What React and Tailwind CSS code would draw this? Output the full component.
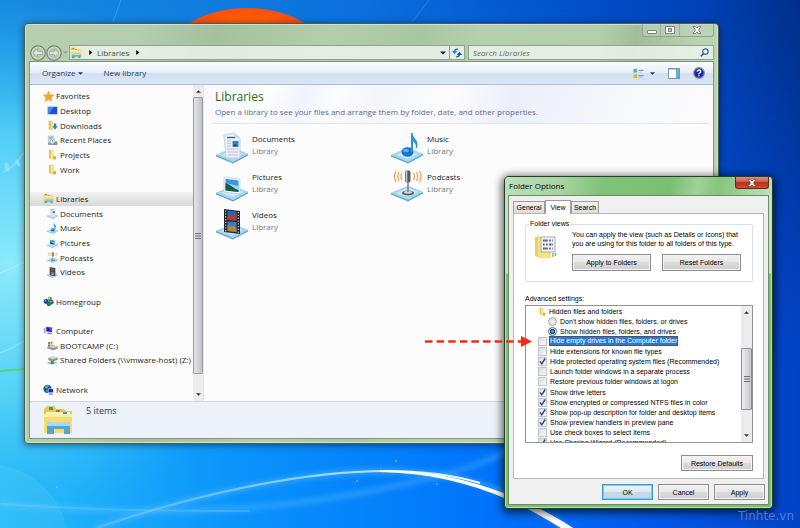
import React from "react";

const SEGOE = "font-['Open_Sans','Noto_Sans',sans-serif]";
const ARIAL = "font-['Liberation_Sans',Arial,sans-serif]";

/* ---------- Wallpaper ---------- */

function Wallpaper() {
  return (
    <svg className="absolute inset-0 h-full w-full" viewBox="0 0 800 528" preserveAspectRatio="none" aria-hidden="true">
      <defs>
        <linearGradient id="sky" x1="0" y1="0" x2="1" y2="0">
          <stop offset="0" stopColor="#188bdf" />
          <stop offset="0.45" stopColor="#0c70dd" />
          <stop offset="0.7" stopColor="#0352cc" />
          <stop offset="0.88" stopColor="#0141b4" />
          <stop offset="1" stopColor="#013089" />
        </linearGradient>
        <linearGradient id="sea" x1="0" y1="0" x2="1" y2="0">
          <stop offset="0" stopColor="#27bdf8" />
          <stop offset="0.3" stopColor="#0a93fb" />
          <stop offset="0.6" stopColor="#0074fb" />
          <stop offset="0.82" stopColor="#0458e8" />
          <stop offset="1" stopColor="#0243c6" />
        </linearGradient>
        <linearGradient id="seaFade" x1="0" y1="0" x2="0" y2="1">
          <stop offset="0" stopColor="#fff" stopOpacity="0" />
          <stop offset="0.7" stopColor="#fff" stopOpacity="1" />
        </linearGradient>
        <mask id="seaMask">
          <rect width="800" height="528" fill="url(#seaFade)" />
        </mask>
        <radialGradient id="glow" gradientUnits="userSpaceOnUse" cx="0" cy="0" r="1" gradientTransform="translate(10 265) scale(250 265)">
          <stop offset="0" stopColor="#8deafb" />
          <stop offset="0.5" stopColor="#58d3f7" stopOpacity="0.9" />
          <stop offset="1" stopColor="#2ab2f4" stopOpacity="0" />
        </radialGradient>
        <radialGradient id="orange" cx="0.5" cy="0.4" r="0.6">
          <stop offset="0" stopColor="#ff8a00" />
          <stop offset="0.5" stopColor="#fd5d08" />
          <stop offset="1" stopColor="#f03a12" />
        </radialGradient>
        <linearGradient id="beam" gradientUnits="userSpaceOnUse" x1="90" y1="0" x2="600" y2="0">
          <stop offset="0" stopColor="#7fd4ff" stopOpacity="0.3" />
          <stop offset="0.5" stopColor="#bfe9ff" stopOpacity="0.85" />
          <stop offset="0.8" stopColor="#fff" />
        </linearGradient>
        <filter id="soft" x="-10%" y="-50%" width="120%" height="200%">
          <feGaussianBlur stdDeviation="2.5" />
        </filter>
      </defs>
      <rect width="800" height="528" fill="url(#sky)" />
      <rect width="800" height="528" fill="url(#sea)" mask="url(#seaMask)" />
      <rect width="800" height="528" fill="url(#glow)" />
      <ellipse cx="247" cy="66" rx="86" ry="58" fill="url(#orange)" />
      <path d="M121 0 113 22" stroke="#5ab4f5" strokeOpacity="0.5" />
      <path d="M429 0 412 22" stroke="#5ab4f5" strokeOpacity="0.35" />
      <path d="M3 172Q14 168 24 152" stroke="#a5ecfa" strokeOpacity="0.5" strokeWidth="1.500" fill="none" />
      <ellipse cx="7" cy="167" rx="2.500" ry="5" fill="#a5ecfa" fillOpacity="0.5" transform="rotate(-20 7 167)" />
      <ellipse cx="18" cy="163" rx="2" ry="4" fill="#a5ecfa" fillOpacity="0.5" transform="rotate(-30 18 163)" />
      <path d="M0 273Q12 269 24 262M0 353Q12 349 24 341" stroke="#c8f5ff" strokeOpacity="0.5" fill="none" />
      <path d="M0 371Q12 370 24 369" stroke="#55d873" strokeWidth="2" fill="none" />
      <path d="M0 466C40 474 60 500 66 528H0Z" fill="#7fdcff" fillOpacity="0.12" />
      <path d="M0 466C40 474 60 500 66 528" stroke="#7fdcff" strokeOpacity="0.15" fill="none" />
      <path d="M0 504C120 514 240 516 360 493S500 455 520 445" stroke="#6cc8ff" strokeOpacity="0.3" strokeWidth="6" fill="none" filter="url(#soft)" />
      <path d="M0 504Q120 512 250 511" stroke="#8bdcff" strokeOpacity="0.25" strokeWidth="2" fill="none" />
      <path d="M96 528C190 496 300 471 386 471C470 471 526 497 580 538" stroke="#58b7ff" strokeOpacity="0.5" strokeWidth="6" fill="none" filter="url(#soft)" />
      <path d="M96 528C190 496 300 471 386 471C420 471 450 474 480 483" stroke="url(#beam)" strokeWidth="2" fill="none" />
      <path d="M380 470C448 470 520 491 582 534L570 534C510 494 450 473 380 472Z" fill="#fff" />
      <g fill="#8fd0ff" fillOpacity="0.7">
        <circle cx="396" cy="461" r="1" />
        <circle cx="357" cy="481" r="1" />
        <circle cx="437" cy="484" r="1" />
        <circle cx="11" cy="299" r="1" />
        <circle cx="57" cy="487" r="1" />
      </g>
    </svg>
  );
}

/* ---------- Icons ---------- */

function Stand() {
  return (
    <g>
      <path d="M0 23 17 16 32 22 17 30Z" fill="#a9d6ef" stroke="#9ccbe6" strokeWidth="0.5" />
      <path d="M5 23 17 18 27 22 17 27Z" fill="#cfe9f7" />
      <path d="M0 23 17 30 32 22V23.500L17 31.500 0 24.500Z" fill="#5ea6d0" />
    </g>
  );
}

const ART = {
  documents: (
    <g>
      <Stand />
      <path d="M8 3 18 1 24 6V26H10Z" fill="#eceef7" stroke="#c3c6d6" strokeWidth="0.8" />
      <path d="M18 1 19 6H24Z" fill="#d3d6e4" />
      <path d="M11 5.500H19" stroke="#2d7077" strokeWidth="1.400" />
      <path d="M11 9H15M11 11.500H15M11 14H15M11 17H22M11 20H22M12 23H22" stroke="#b4b9ca" strokeWidth="0.8" />
      <rect x="16.500" y="9" width="6" height="5.500" fill="#2a86cc" />
      <path d="M16.500 14.500 19 12 22.500 14.500Z" fill="#15503c" />
    </g>
  ),
  music: (
    <g>
      <Stand />
      <ellipse cx="16.500" cy="20" rx="6" ry="4.800" fill="#1674cf" />
      <ellipse cx="15" cy="18.500" rx="3" ry="1.800" fill="#5fb1ee" />
      <path d="M20 20V1H21.500C22 6 27 8 26.500 13C26.300 15 25.500 16.500 24.500 18C25.500 13 24.500 11 22 9.500V20Z" fill="#2a90e0" />
    </g>
  ),
  pictures: (
    <g>
      <Stand />
      <path d="M8 7 24 9V24L8 22Z" fill="#f4f8fb" stroke="#bccbd6" strokeWidth="0.7" />
      <path d="M9.500 8.800 22.500 10.500V22L9.500 20.500Z" fill="#3c93de" />
      <path d="M9.500 13 22.500 16V22L9.500 20.500Z" fill="#9fd3ef" />
      <path d="M9.500 13C14 14 18 19 22.500 20V22L9.500 20.500Z" fill="#175b4a" />
    </g>
  ),
  podcasts: (
    <g>
      <Stand />
      <ellipse cx="17" cy="23" rx="6" ry="2.500" fill="#59616b" />
      <ellipse cx="17" cy="22.300" rx="4" ry="1.300" fill="#d9dee3" />
      <path d="M17 12V22" stroke="#777e86" strokeWidth="1.500" />
      <rect x="14" y="0.500" width="5.500" height="12" rx="1.800" fill="#565b63" />
      <path d="M15.500 1V12" stroke="#cdd1d6" strokeWidth="1.500" />
      <path d="M11 3Q9 6.500 11 10M8 2Q5.500 6.500 8 11M5 1Q2 6.500 5 12M22.500 3Q24.500 6.500 22.500 10M25.500 2Q28 6.500 25.500 11M28.500 1Q31.500 6.500 28.500 12" stroke="#f2a44c" strokeWidth="1.300" fill="none" />
    </g>
  ),
  videos: (
    <g>
      <Stand />
      <path d="M8 1 24 3V26L8 24Z" fill="#25262a" />
      <path d="M11.500 2.500 20.500 3.600V12.500L11.500 12Z" fill="#2964b6" />
      <path d="M11.500 9C14 5 17 11 20.500 6V12.500L11.500 12Z" fill="#c23a24" />
      <path d="M11.500 13.500 20.500 14V24L11.500 23Z" fill="#2f7fd4" />
      <path d="M11.500 17C14 21 18 15 20.500 20V24L11.500 23Z" fill="#b98436" />
      <path d="M9.700 2.500V23.500M22.300 4V25" stroke="#b9bec5" strokeWidth="1.200" strokeDasharray="1.300 1.500" />
    </g>
  ),
  libraries: (
    <g>
      <path d="M2 5 5 2H12L14 5H22L24 7H30V27H2Z" fill="#e9c755" />
      <path d="M4 8H28V12H4Z" fill="#fff6c8" />
      <path d="M7 3H11V6H7Z" fill="#3aa35d" />
      <path d="M14 6H18V8H14Z" fill="#db5b37" />
      <path d="M21 8H25V10H21Z" fill="#3d8fd8" />
      <path d="M2 10H30V29H2Z" fill="#f4dd77" />
      <path d="M2 10H30V13H2Z" fill="#fbeea3" />
      <path d="M5 21Q5 18 8 18H25Q28 18 28 21V30H22V25H12V30H5Z" fill="#5aa5cf" />
      <path d="M5 21Q5 18 8 18H25Q28 18 28 21V22H5Z" fill="#a5dcf2" />
    </g>
  ),
  star: <path d="M16 1 20.500 11 31 12 23 19.500 25.500 30 16 24.500 6.500 30 9 19.500 1 12 11.500 11Z" fill="#fba52d" stroke="#ee8a1c" strokeWidth="1.500" />,
  desktop: (
    <g>
      <rect x="1" y="4" width="30" height="24" fill="#9fb2cf" />
      <rect x="3" y="6" width="26" height="20" fill="#1f4fd0" />
      <path d="M3 6H20L6 26H3Z" fill="#4f83ea" />
    </g>
  ),
  folder: (
    <g>
      <path d="M6 3 13 2V29L6 27Z" fill="#e2bd4b" />
      <path d="M11 3H19V19L26 20V30H11Z" fill="#efd572" />
      <path d="M11 3 16 6V30L11 28Z" fill="#f9ebab" />
      <path d="M18 22H26V30H18Z" fill="#d7ae3e" />
    </g>
  ),
  downloads: (
    <g>
      <path d="M5 3 12 2V28L5 26Z" fill="#e2bd4b" />
      <path d="M10 3H18V30H10Z" fill="#f2dc83" />
      <path d="M20 10H27V18H31L23.500 28 16 18H20Z" fill="#2484d8" />
    </g>
  ),
  recent: (
    <g>
      <path d="M4 3H20V18H4Z" fill="#d7e2ea" stroke="#98a9b6" strokeWidth="1.500" />
      <path d="M7 7H16M7 11H14" stroke="#4b8fae" strokeWidth="2" />
      <path d="M3 21H17V29H3Z" fill="#8fa0ad" />
      <path d="M17 19H30V29H17Z" fill="#7d8b96" />
      <circle cx="16" cy="19" r="7" fill="#eef5f9" stroke="#6c9ab3" strokeWidth="1.500" />
      <path d="M16 14V19L20 21" stroke="#456" strokeWidth="1.500" fill="none" />
    </g>
  ),
  homegroup: (
    <g>
      <circle cx="9" cy="16" r="7" fill="#1b3f9c" />
      <circle cx="20" cy="9" r="6.500" fill="#5ca832" />
      <circle cx="24" cy="18" r="7" fill="#2b55c0" />
      <circle cx="17" cy="23" r="6.500" fill="#1c7f3f" />
      <circle cx="7" cy="14" r="2.500" fill="#7ea5ef" />
      <circle cx="18" cy="7" r="2.500" fill="#c4ea93" />
      <circle cx="23" cy="16" r="2.500" fill="#a6c2f6" />
    </g>
  ),
  computer: (
    <g>
      <path d="M2 8H8V24H2Z" fill="#aab3c4" />
      <path d="M8 4 28 6V22L8 20Z" fill="#c5cbd8" />
      <path d="M10 6 26 8V20L10 18Z" fill="#1820b5" />
      <path d="M17 8 26 9V20Z" fill="#4a63e6" />
      <path d="M13 22H24L28 27H12Z" fill="#8c95a8" />
    </g>
  ),
  drive: (
    <g>
      <path d="M1 20 12 14 31 19V25L20 30 1 25Z" fill="#8c9287" />
      <path d="M1 20 12 14 31 19 20 24Z" fill="#c9cec4" />
      <path d="M3 6H9V12H3Z" fill="#e06635" />
      <path d="M10 5H16V11H10Z" fill="#6cab3c" />
      <path d="M3 13H9V19H3Z" fill="#3b86cf" />
      <path d="M10 12H16V17H10Z" fill="#edbd36" />
    </g>
  ),
  netdrive: (
    <g>
      <path d="M4 9 18 4 31 8V14L18 19 4 15Z" fill="#868d8b" />
      <path d="M4 9 18 4 31 8 18 13Z" fill="#d0d5d3" />
      <path d="M2 23H28" stroke="#9aa29f" strokeWidth="4" />
      <path d="M11 17H19V27H11Z" fill="#2f9e57" />
    </g>
  ),
  network: (
    <g>
      <circle cx="13" cy="14" r="12" fill="#1c49b6" />
      <path d="M5 7Q13 0 18 5Q15 12 9 14Q4 12 5 7M9 17Q15 17 14 24Q8 24 9 17" fill="#4fb45d" />
      <path d="M14 13H31V26H14Z" fill="#c6cdda" />
      <path d="M16 15H29V24H16Z" fill="#1a24ae" />
      <path d="M18 27H27L30 31H16Z" fill="#8590a8" />
    </g>
  ),
};

function Icon({ name, className }) {
  return (
    <svg viewBox="0 0 32 32" className={`shrink-0 ${className}`} aria-hidden="true">
      {ART[name]}
    </svg>
  );
}

function Triangle({ dir = "down", className }) {
  const d = { down: "M0 2H8L4 6Z", up: "M0 6H8L4 2Z", right: "M2 0V8L7 4Z" }[dir];
  return (
    <svg viewBox="0 0 8 8" className={`shrink-0 ${className}`} aria-hidden="true">
      <path d={d} fill="currentColor" />
    </svg>
  );
}

function ScrollGrip() {
  return (
    <svg viewBox="0 0 6 6" className="h-[6px] w-[6px]" aria-hidden="true">
      <path d="M0 0.500H6M0 3H6M0 5.500H6" stroke="#6d6f76" strokeWidth="1" />
    </svg>
  );
}

/* ---------- Explorer window ---------- */

function CaptionButtons() {
  return (
    <div className="flex h-[13px] rounded-b-[3px] border border-t-0 border-[#8fa68b] bg-[#bdd3b7]/60">
      <button aria-label="Minimize" className="flex w-[18px] items-center justify-center border-r border-[#9bb196]">
        <svg viewBox="0 0 10 8" className="h-2 w-[10px]">
          <rect x="0.500" y="4.500" width="9" height="3" rx="0.500" fill="#fff" stroke="#7b877a" />
        </svg>
      </button>
      <button aria-label="Maximize" className="flex w-[19px] items-center justify-center border-r border-[#9bb196]">
        <svg viewBox="0 0 10 8" className="h-2 w-[10px]">
          <rect x="0.500" y="0.500" width="9" height="7" fill="#f3f6f2" stroke="#7b877a" />
          <rect x="3.500" y="2.500" width="3" height="3" fill="#b8ccb3" stroke="#7b877a" />
        </svg>
      </button>
      <button aria-label="Close" className="flex w-[33px] items-center justify-center">
        <svg viewBox="0 0 10 8" className="h-2 w-[10px]">
          <path d="M1 0.500H3.500L5 2.200 6.500 0.500H9L6.500 4 9 7.500H6.500L5 5.800 3.500 7.500H1L3.500 4Z" fill="#fff" stroke="#6e786d" strokeWidth="0.9" />
        </svg>
      </button>
    </div>
  );
}

function NavButton({ label, d }) {
  return (
    <button aria-label={label} className="h-4 w-4">
      <svg viewBox="0 0 16 16" className="h-4 w-4">
        <circle cx="8" cy="8" r="7.200" fill="#b5c9b1" stroke="#717f70" strokeWidth="1.200" />
        <circle cx="8" cy="8" r="6" fill="none" stroke="#d9e6d6" strokeWidth="0.8" />
        <path d={d} fill="#dbe7d8" stroke="#93a490" strokeWidth="0.700" />
      </svg>
    </button>
  );
}

function AddressRow() {
  return (
    <div className="flex h-[17px] items-center pl-px text-[8px] leading-none">
      <NavButton label="Back" d="M3 8 7.500 4V6.500H12.500V9.500H7.500V12Z" />
      <NavButton label="Forward" d="M13 8 8.500 4V6.500H3.500V9.500H8.500V12Z" />
      <Triangle className="mx-px h-[5px] w-[5px] text-[#8da08a]" />
      <div className="flex h-[15px] flex-1 items-center border border-[#8ea48b] bg-[#edf3ec]/85 text-[#444b44]">
        <Icon name="libraries" className="h-3 w-3" />
        <Triangle dir="right" className="ml-[6px] h-[5px] w-[5px] text-black" />
        <span className="ml-1">Libraries</span>
        <Triangle dir="right" className="ml-[6px] h-[5px] w-[5px] text-black" />
        <span className="flex-1" />
        <Triangle className="mr-[3px] h-[6px] w-[6px] text-[#12145a]" />
        <button aria-label="Refresh" className="flex h-full w-[15px] items-center justify-center border-l border-[#8ea48b]">
          <svg viewBox="0 0 12 12" className="h-[10px] w-[10px]">
            <path d="M7 1.500Q3.500 1 3.200 4M5 10.500Q8.500 11 8.800 8" stroke="#2765c0" strokeWidth="1.800" fill="none" />
            <path d="M0 3.500H6.400L3.200 7.500Z" fill="#3a86dc" />
            <path d="M5.600 8.500H12L8.800 4.500Z" fill="#174fa5" />
          </svg>
        </button>
      </div>
      <label className="ml-[3px] flex h-[15px] w-[246px] items-center border border-[#8ea48b] bg-[#edf3ec]/85 pr-1 pl-1">
        <input aria-label="Search Libraries" placeholder="Search Libraries" className="min-w-0 flex-1 bg-transparent text-[8px] italic outline-none placeholder:text-[#626a62]" />
        <svg viewBox="0 0 10 10" className="h-[9px] w-[9px]" aria-hidden="true">
          <circle cx="6" cy="4" r="3" fill="#e8f2fa" stroke="#2b5fae" strokeWidth="1.300" />
          <path d="M4 6 1 9.300" stroke="#2b5fae" strokeWidth="1.700" />
        </svg>
      </label>
    </div>
  );
}

function Toolbar() {
  return (
    <div className="flex h-[23px] items-center border-b border-[#a9bdd8] bg-[linear-gradient(#fbfdff,#e6eef9_49%,#d3dff0_50%,#dbe6f5)] pr-2 pl-3 text-[8px] text-[#1e395b]">
      <button className="flex items-center gap-[3px]">
        Organize
        <Triangle className="h-[5px] w-[5px]" />
      </button>
      <button className="ml-5">New library</button>
      <span className="flex-1" />
      <button aria-label="Change your view" className="flex items-center gap-[6px]">
        <svg viewBox="0 0 12 12" className="h-[11px] w-[11px]">
          <rect x="0.500" y="1" width="4" height="4" fill="#5cb3ad" />
          <rect x="0.500" y="7" width="4" height="4" fill="#d9b93a" />
          <path d="M6 2.500H11.500M6 8.500H11.500" stroke="#67778c" />
          <path d="M6 4.500H9.500M6 10.500H9.500" stroke="#b4bfcd" />
        </svg>
        <Triangle className="h-[5px] w-[5px]" />
      </button>
      <button aria-label="Show the preview pane" className="ml-[13px]">
        <svg viewBox="0 0 12 11" className="h-[11px] w-3">
          <rect x="0.500" y="0.500" width="11" height="10" fill="#fff" stroke="#7a93b0" />
          <path d="M1 1.500H11" stroke="#b9cbe0" />
          <rect x="8" y="1" width="3" height="9" fill="#66b2cd" />
        </svg>
      </button>
      <button aria-label="Get help" className="ml-[13px]">
        <svg viewBox="0 0 12 12" className="h-3 w-3">
          <circle cx="6" cy="6" r="5.300" fill="#1527a8" stroke="#8c93a6" strokeWidth="1.200" />
          <path d="M4.200 4.700Q4.300 3 6 3T7.800 4.600Q7.800 5.500 6.700 6.100T6 7.300M6 8.200V9.400" stroke="#fff" strokeWidth="1.300" fill="none" />
        </svg>
      </button>
    </div>
  );
}

const TREE = [
  { name: "Favorites", icon: "star" },
  { name: "Desktop", icon: "desktop", child: true },
  { name: "Downloads", icon: "downloads", child: true },
  { name: "Recent Places", icon: "recent", child: true },
  { name: "Projects", icon: "folder", child: true },
  { name: "Work", icon: "folder", child: true },
  null,
  { name: "Libraries", icon: "libraries", selected: true },
  { name: "Documents", icon: "documents", child: true },
  { name: "Music", icon: "music", child: true },
  { name: "Pictures", icon: "pictures", child: true },
  { name: "Podcasts", icon: "podcasts", child: true },
  { name: "Videos", icon: "videos", child: true },
  null,
  { name: "Homegroup", icon: "homegroup" },
  null,
  { name: "Computer", icon: "computer" },
  { name: "BOOTCAMP (C:)", icon: "drive", child: true },
  { name: "Shared Folders (\\\\vmware-host) (Z:)", icon: "netdrive", child: true },
  null,
  { name: "Network", icon: "network" },
];

function Sidebar() {
  return (
    <nav className="flex w-[174px] shrink-0 border-r border-[#dfe9f6]">
      <ul className="grid min-w-0 flex-1 grid-rows-[repeat(21,minmax(0,1fr))] py-1 text-[8px] leading-none text-[#1c1c1c]">
        {TREE.map((row, i) =>
          row ? (
            <li
              key={i}
              className={`flex items-center gap-[2px] whitespace-nowrap ${row.child ? "pl-[17px]" : "pl-[13px]"} ${
                row.selected ? "bg-[linear-gradient(#f1f1f1,#d9d9d9)]" : ""
              }`}
            >
              <Icon name={row.icon} className="h-[11px] w-[11px]" />
              <span>{row.name}</span>
            </li>
          ) : (
            <li key={i} aria-hidden="true" />
          )
        )}
      </ul>
      <div className="flex w-[10px] shrink-0 flex-col items-center bg-[#ececee] text-[#333]">
        <span className="flex h-3 items-center">
          <Triangle dir="up" className="h-[5px] w-[5px]" />
        </span>
        <span className="flex w-full flex-1 items-center justify-center rounded-[1px] border border-[#9b9ca2] bg-[linear-gradient(90deg,#e4e4e8,#c2c3ca)]">
          <ScrollGrip />
        </span>
        <span className="flex h-[27px] items-end pb-1">
          <Triangle className="h-[5px] w-[5px]" />
        </span>
      </div>
    </nav>
  );
}

const LIBRARIES = [
  { name: "Documents", icon: "documents" },
  { name: "Music", icon: "music" },
  { name: "Pictures", icon: "pictures" },
  { name: "Podcasts", icon: "podcasts" },
  { name: "Videos", icon: "videos" },
];

function LibraryPane() {
  return (
    <main className="flex min-w-0 flex-1 flex-col bg-[#fcfcfc]">
      <header className="h-[38px] bg-[linear-gradient(115deg,#f8faff_8%,#fff_12%,#f1f4fc_20%,#fbfcff_26%,#f4f6fc_34%,#fcfcfe_48%,#eceff9_60%,#f7f8fc_80%,#fbfbfd)] pt-1 pl-[11px]">
        <h1 className="text-[12px] leading-4 text-[#1b701b]">Libraries</h1>
        <p className="whitespace-nowrap text-[8px] leading-[14px] text-[#5a6a85]">
          Open a library to see your files and arrange them by folder, date, and other properties.
        </p>
      </header>
      <div className="mr-1 ml-2 h-px bg-[#dce8f8]" />
      <ul className="grid grid-cols-[175px_175px] pt-[5px] pl-3">
        {LIBRARIES.map((lib) => (
          <li key={lib.name} className="flex h-[38px] items-center gap-1">
            <Icon name={lib.icon} className="h-8 w-8" />
            <div className="pb-[6px] text-[8px] leading-[12px]">
              <div className="text-[#1a1a1a]">{lib.name}</div>
              <div className="text-[#777]">Library</div>
            </div>
          </li>
        ))}
      </ul>
    </main>
  );
}

function ExplorerWindow() {
  return (
    <section
      aria-label="Libraries"
      className={`absolute top-[23px] left-6 flex h-[421px] w-[695px] flex-col rounded-[4px] border border-[#4c5c55] bg-[linear-gradient(100deg,#b6cfb0_0%,#b3ceae_15%,#a5c09f_25%,#b2ceac_40%,#a9c6a3_52%,#b5d0af_60%,#b4cfae_75%,#a2bd9c_80%,#b9d3b3_88%)] px-1 pb-1 shadow-[inset_0_0_0_1px_#d0e2cb,0_1px_7px_#00000080] ${SEGOE}`}
    >
      <div className="flex h-5 justify-end">
        <CaptionButtons />
      </div>
      <AddressRow />
      <div className="flex min-h-0 flex-1 flex-col border border-[#7f957e] bg-[#fcfcfc]">
        <Toolbar />
        <div className="flex min-h-0 flex-1">
          <Sidebar />
          <LibraryPane />
        </div>
        <footer className="flex h-[37px] gap-3 border-t border-[#ccd8ec] bg-[#ecf1fa] pt-[2px] pl-3 text-[#24395a]">
          <Icon name="libraries" className="h-8 w-8" />
          <span className="text-[9px] leading-[14px]">5 items</span>
        </footer>
      </div>
    </section>
  );
}

/* ---------- Folder Options dialog ---------- */

function PushButton({ children, className, primary }) {
  return (
    <button
      className={`border text-[7px] leading-none text-black ${
        primary
          ? "border-[#3b9bd0] bg-[linear-gradient(#eef5f9,#dbe9f1_49%,#c7dce8_50%,#b9d6e6)] shadow-[inset_0_0_0_1px_#6fd0f5]"
          : "border-[#8d8d8d] bg-[linear-gradient(#f2f2f2,#e8e8e8_49%,#dcdcdc_50%,#cfcfcf)] shadow-[inset_0_0_0_1px_#f4f4f4]"
      } ${className}`}
    >
      {children}
    </button>
  );
}

function Tab({ children, active, className }) {
  return (
    <button
      role="tab"
      aria-selected={!!active}
      className={`border border-b-0 border-[#9a9ca3] text-[7px] leading-none ${
        active ? "-mb-px h-[14px] bg-white pb-px" : "h-3 bg-[linear-gradient(#f2f2f2,#dcdcdc)]"
      } ${className}`}
    >
      {children}
    </button>
  );
}

const SETTINGS = [
  { label: "Hide empty drives in the Computer folder", selected: true },
  { label: "Hide extensions for known file types" },
  { label: "Hide protected operating system files (Recommended)", on: true },
  { label: "Launch folder windows in a separate process" },
  { label: "Restore previous folder windows at logon" },
  { label: "Show drive letters", on: true },
  { label: "Show encrypted or compressed NTFS files in color", on: true },
  { label: "Show pop-up description for folder and desktop items", on: true },
  { label: "Show preview handlers in preview pane", on: true },
  { label: "Use check boxes to select items" },
  { label: "Use Sharing Wizard (Recommended)", on: true },
];

function RadioRow({ label, checked }) {
  return (
    <label className="flex h-[10px] items-center gap-[3px] pl-[22px]">
      <input
        type="radio"
        name="hidden-files"
        defaultChecked={checked}
        className="h-[9px] w-[9px] appearance-none rounded-full border border-[#a3a7ac] bg-[radial-gradient(circle,#f4f4f4,#d5d7da)] checked:border-[#5d6a78] checked:bg-[radial-gradient(circle,#2fa7e6_20%,#0d3760_45%,#e8eef3_60%)]"
      />
      <span>{label}</span>
    </label>
  );
}

function CheckRow({ label, on, selected }) {
  return (
    <label className="flex h-[10px] items-center pl-3">
      <span className="mr-[2px] grid h-[9px] w-[9px] shrink-0">
        <input
          type="checkbox"
          defaultChecked={on}
          className="peer col-start-1 row-start-1 h-[9px] w-[9px] appearance-none border border-[#c0c3c7] bg-[linear-gradient(135deg,#d9dce0,#fafafa)]"
        />
        <svg viewBox="0 0 9 9" className="pointer-events-none invisible col-start-1 row-start-1 h-[9px] w-[9px] peer-checked:visible" aria-hidden="true">
          <path d="M2 4.300 3.800 6.800 7.200 1.500" stroke="#2b3f94" strokeWidth="1.400" fill="none" />
        </svg>
      </span>
      <span className={selected ? "h-[10px] border border-[#7a4a20] bg-[#1a7bf0] leading-[8px] text-white" : "pl-px"}>{label}</span>
    </label>
  );
}

function AdvancedList() {
  return (
    <div className="flex h-[138px] overflow-hidden border border-[#8f939b] bg-white">
      <div className="flex h-[142px] min-w-0 flex-1 flex-col justify-between text-[7px] leading-none whitespace-nowrap">
        <div className="flex h-[10px] items-center gap-[2px] pl-3">
          <Icon name="folder" className="h-[9px] w-[9px]" />
          <span>Hidden files and folders</span>
        </div>
        <RadioRow label="Don't show hidden files, folders, or drives" />
        <RadioRow label="Show hidden files, folders, and drives" checked />
        {SETTINGS.map((s) => (
          <CheckRow key={s.label} {...s} />
        ))}
      </div>
      <div className="flex w-[11px] flex-col items-center bg-[#ececee] text-[#333]">
        <span className="flex h-[42px] items-start pt-1">
          <Triangle dir="up" className="h-[5px] w-[5px]" />
        </span>
        <span className="flex w-full flex-1 items-center justify-center rounded-[1px] border border-[#8d8e95] bg-[linear-gradient(90deg,#ededf0,#c4c5cc)]">
          <ScrollGrip />
        </span>
        <span className="flex h-8 items-end pb-1">
          <Triangle className="h-[5px] w-[5px]" />
        </span>
      </div>
    </div>
  );
}

function FolderViewsIcon() {
  return (
    <svg viewBox="0 0 22 22" className="mt-2 h-[22px] w-[22px] shrink-0" aria-hidden="true">
      <path d="M0 1 5 0V22L0 20Z" fill="#ecd067" />
      <path d="M3 1H16V22H3Z" fill="#f6e37e" />
      <path d="M6 1H20V16H6Z" fill="#f3f5f8" stroke="#8d98a6" strokeWidth="0.8" />
      <path d="M8 4.500H18M8 8.500H18M8 12.500H18" stroke="#365fae" strokeWidth="1.800" strokeDasharray="1.600 1.500" />
      <path d="M9.500 4.500H11M15 8.500H16.500M9.500 12.500H11" stroke="#c53b2e" strokeWidth="1.800" />
      <path d="M18 17V21M20.500 17V20" stroke="#8c97a3" strokeWidth="1.300" />
    </svg>
  );
}

function FolderOptions() {
  return (
    <section
      role="dialog"
      aria-label="Folder Options"
      className={`absolute top-[176px] left-[504px] flex w-[269px] flex-col rounded-[4px] border border-[#25402a] bg-[linear-gradient(#c8e6c3_0,#c8e6c3_96px,#7cc172_97px)] px-[3px] pb-[3px] text-black shadow-[inset_0_0_0_1px_#b5dfae,0_2px_9px_2px_#000000a6] ${ARIAL}`}
    >
      <div className="-mx-[2px] flex h-[18px] items-start justify-between rounded-t-[3px] bg-[linear-gradient(100deg,#bfe0ba_0%,#a6d39f_22%,#80c378_36%,#79bf71_62%,#a1d199_72%,#84c57c_80%,#bfe0b8)] pr-[2px] pl-[3px]">
        <h2 className={`text-[8px] leading-[18px] ${SEGOE}`}>Folder Options</h2>
        <button aria-label="Close" className="flex h-3 w-[34px] items-center justify-center rounded-b-[3px] border border-t-0 border-[#5a2a22] bg-[linear-gradient(#dc9082,#cf5a46_45%,#b8301b_50%,#cf4c31)]">
          <svg viewBox="0 0 10 8" className="h-2 w-[10px]">
            <path d="M1 0.500H3.500L5 2.200 6.500 0.500H9L6.500 4 9 7.500H6.500L5 5.800 3.500 7.500H1L3.500 4Z" fill="#fff" stroke="#6b3a33" strokeWidth="0.700" />
          </svg>
        </button>
      </div>
      <div className="border border-[#6c8a6a] bg-[#f0f0f0] p-1">
        <div role="tablist" className="flex items-end">
          <Tab className="w-8">General</Tab>
          <Tab active className="w-[26px]">View</Tab>
          <Tab className="w-7">Search</Tab>
        </div>
        <div className="flex flex-col border border-[#b4b6bb] bg-white pt-[6px] pr-[10px] pb-[7px] pl-[11px]">
          <fieldset className="h-[62px] min-w-0 rounded-[2px] border border-[#d8e0e6] pl-[9px]">
            <legend className="-ml-[6px] px-[1px] text-[7px] leading-[8px]">Folder views</legend>
            <div className="flex gap-[15px]">
              <FolderViewsIcon />
              <div className="pt-[2px]">
                <p className="text-[7px] leading-[9px] whitespace-nowrap">
                  You can apply the view (such as Details or Icons) that
                  <br />
                  you are using for this folder to all folders of this type.
                </p>
                <div className="mt-[6px] flex gap-[11px]">
                  <PushButton className="h-[17px] w-[79px]">Apply to Folders</PushButton>
                  <PushButton className="h-[17px] w-[79px]">Reset Folders</PushButton>
                </div>
              </div>
            </div>
          </fieldset>
          <h3 className="mt-3 mb-px text-[7px] leading-[10px]">Advanced settings:</h3>
          <AdvancedList />
          <PushButton className="mt-3 h-4 w-[72px] self-end">Restore Defaults</PushButton>
        </div>
        <div className="-mr-px flex justify-end gap-[5px] pt-[5px]">
          <PushButton primary className="h-4 w-[51px]">OK</PushButton>
          <PushButton className="h-4 w-[51px]">Cancel</PushButton>
          <PushButton className="h-4 w-[51px]">Apply</PushButton>
        </div>
      </div>
    </section>
  );
}

/* ---------- Desktop ---------- */

export default function App() {
  return (
    <div className="relative min-h-screen w-full overflow-hidden bg-[#0a6fe0]">
      <Wallpaper />
      <ExplorerWindow />
      <FolderOptions />
      <svg className="absolute top-[335px] left-[425px] h-[13px] w-[108px]" viewBox="0 0 108 13" aria-hidden="true">
        <path d="M0 6.500H96" stroke="#fa2a12" strokeWidth="2.500" strokeDasharray="7.500 4.100" />
        <path d="M96 1V12L107 6.500Z" fill="#fa2a12" />
      </svg>
      <div className="absolute right-[6px] bottom-1 font-['DejaVu_Sans',Verdana,sans-serif] text-[12px] leading-4 text-[#6d8fd6]/75">
        Tinhte.vn
      </div>
    </div>
  );
}
